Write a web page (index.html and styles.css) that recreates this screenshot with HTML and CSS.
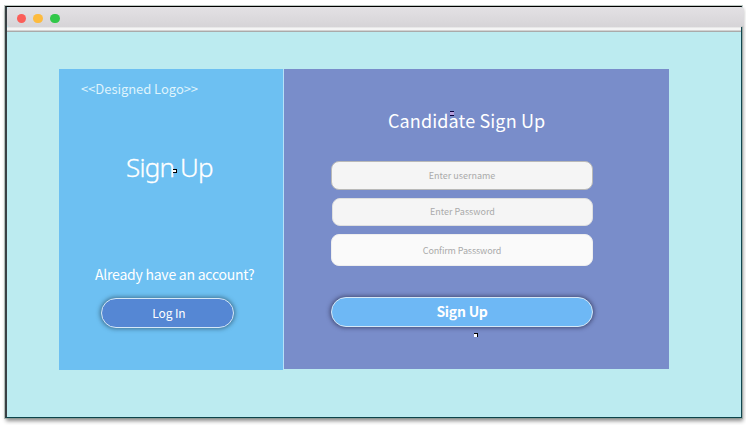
FILE: index.html
```html
<!DOCTYPE html>
<html lang="en">
<head>
<meta charset="utf-8">
<title>Candidate Sign Up</title>
<link rel="stylesheet" href="styles.css">
</head>
<body>
<div class="window">
  <header class="titlebar">
    <span class="dot red"></span><span class="dot amber"></span><span class="dot green"></span>
  </header>
  <div class="toolbar"></div>
  <main class="content">
    <section class="side">
      <div class="logo"><span>&lt;&lt;Designed Logo&gt;&gt;</span></div>
      <h1><span>Sign Up</span><svg class="marker m1" width="4" height="4" shape-rendering="crispEdges"><path fill="#000" d="M0 0h4v4H0z"/><path fill="#fff" d="M0 1h3v2H0z"/></svg></h1>
      <p><span>Already have an account?</span></p>
      <button class="pill login" type="button"><span>Log In</span></button>
    </section>
    <form class="form">
      <h2><span>Candidate Sign Up</span><svg class="marker m2" width="4" height="5" shape-rendering="crispEdges"><path fill="#08003c" d="M0 0h4v1H0zM0 4h4v1H0z"/><path fill="#b59edb" d="M0 1h4v3H0z"/></svg></h2>
      <div class="field username"><span>Enter username</span></div>
      <div class="field password"><span>Enter Password</span></div>
      <div class="field confirm"><span>Confirm Passsword</span></div>
      <button class="pill submit" type="button"><span>Sign Up</span><svg class="marker m3" width="4" height="4" shape-rendering="crispEdges"><path fill="#000" d="M0 0h4v4H0z"/><path fill="#fff" d="M0 1h3v3H0z"/></svg></button>
    </form>
  </main>
</div>
</body>
</html>
```
FILE: styles.css
```css
* { box-sizing: border-box; }
body {
  margin: 0;
  width: 746px;
  height: 425px;
  overflow: hidden;
  background: #fff;
  font-family: "Noto Sans CJK SC", "Noto Sans", sans-serif;
}
.window {
  width: 737px;
  height: 412px;
  margin: 6px 0 0 5px;
  border-top: 1px solid #000;
  border-left: 2px solid #383f43;
  border-right: 1px solid #124650;
  border-bottom: 1px solid #0c444b;
  background: #bcebf0;
  box-shadow: 0 0 0 1px rgba(130, 150, 140, .5), 1px 3px 4px rgba(0, 0, 0, .45);
}
.titlebar {
  display: flex;
  align-items: center;
  gap: 7px;
  width: 737px;
  height: 20px;
  padding: 3px 0 0 9.5px;
  border-radius: 3px;
  background: linear-gradient(#e3e1e4, #d6d4d7);
}
.dot { width: 9.8px; height: 9.8px; border-radius: 50%; }
.red { background: #fb5e59; }
.amber { background: #fdbb3e; }
.green { background: #32c84a; }
.toolbar {
  height: 5px;
  background: linear-gradient(#e8e8e8 0 1px, #f5f5f5 1px 3px, #d2d2d2 3px 4px, #aaa 4px);
}
.content {
  display: grid;
  grid-template-columns: 224px 386px;
  padding: 37px 0 0 52px;
}
span { white-space: nowrap; }
.side {
  display: flex;
  flex-direction: column;
  height: 301px;
  background: #6dc0f2;
  color: #fff;
}
.logo {
  height: 40px;
  padding-left: 22px;
  font-size: 13px;
  line-height: 40px;
  letter-spacing: -.05px;
  color: #def3fc;
}
h1, h2, p { margin: 0; font-weight: 400; }
h1 {
  position: relative;
  height: 118px;
  padding: 40px 0 0 67px;
  font: 300 26px/36px "Noto Sans", sans-serif;
  letter-spacing: -.8px;
  -webkit-text-stroke: .3px #fff;
}
p {
  height: 32px;
  margin-top: 31px;
  padding-left: 36px;
  font-size: 14px;
  line-height: 32px;
  letter-spacing: -.23px;
}
.pill {
  display: flex;
  align-items: center;
  justify-content: center;
  padding: 0;
  border: 1px solid #d5e8f7;
  border-radius: 16px;
  color: #fff;
  font-family: inherit;
}
.login {
  width: 133px;
  height: 30px;
  margin: 8px 0 0 42.4px;
  padding: 0 0 2px 2px;
  background: #5587d4;
  font-size: 12px;
  letter-spacing: -.1px;
  box-shadow: 0 0 4px 1px rgba(35, 65, 85, .6);
}
.form {
  height: 300px;
  border-left: 1px solid #b6e1f8;
  background: #798dca;
}
h2 {
  position: relative;
  height: 92px;
  padding: 31px 0 0 104px;
  color: #fff;
  font-size: 18px;
  line-height: 40px;
  letter-spacing: .12px;
}
.field {
  display: flex;
  align-items: center;
  justify-content: center;
  width: 262px;
  margin-left: 47px;
  border: 1px solid #dedfdf;
  border-radius: 8px;
  background: #f5f5f5;
  color: #aaa;
  font-size: 9px;
}
.username { height: 29px; border-color: #b9b9b8; }
.password { width: 261px; height: 28px; margin: 8px 0 0 48px; padding-bottom: 2px; }
.confirm { height: 32px; margin-top: 8px; background: #fafafa; border-color: #eee; letter-spacing: -.12px; }
.submit {
  position: relative;
  width: 262px;
  height: 30px;
  margin: 31px 0 0 47px;
  padding-bottom: 2px;
  background: #6eb8f5;
  font-size: 14px;
  font-weight: 700;
  letter-spacing: -.25px;
  box-shadow: 0 0 4px 1px rgba(35, 35, 65, .6);
}
.marker { position: absolute; }
.m1 { left: 114px; top: 60px; }
.m2 { left: 166px; top: 42px; }
.m3 { left: 142px; top: 35px; }
```
